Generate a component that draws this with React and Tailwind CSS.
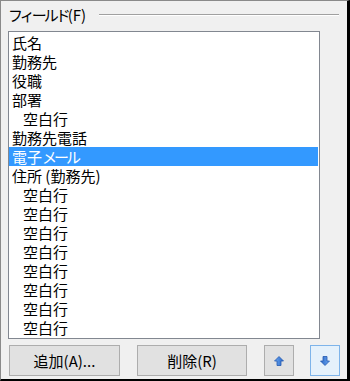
import React from 'react';

const Kana = ({ children }) => <span className="tracking-[-3px]">{children}</span>;

const items = [
  { label: '氏名' },
  { label: '勤務先' },
  { label: '役職' },
  { label: '部署' },
  { label: '空白行', indent: true },
  { label: '勤務先電話' },
  { label: <>電子<Kana>メール</Kana></>, selected: true },
  { label: '住所 (勤務先)' },
  { label: '空白行', indent: true },
  { label: '空白行', indent: true },
  { label: '空白行', indent: true },
  { label: '空白行', indent: true },
  { label: '空白行', indent: true },
  { label: '空白行', indent: true },
  { label: '空白行', indent: true },
  { label: '空白行', indent: true },
];

const Arrow = ({ down }) => (
  <svg width="10" height="10" viewBox="0 0 10 10" className={down ? 'rotate-180' : ''}>
    <defs>
      <linearGradient id={down ? 'gd' : 'gu'} x1="0" y1="0" x2="1" y2="0">
        <stop offset="0" stopColor="#6aa6f0" />
        <stop offset="1" stopColor="#2a68c8" />
      </linearGradient>
    </defs>
    <polygon
      points="5,0.5 9.5,5 7,5 7,9.5 3,9.5 3,5 0.5,5"
      fill={`url(#${down ? 'gd' : 'gu'})`}
      stroke="#2459b0"
      strokeWidth="0.8"
      strokeLinejoin="round"
    />
  </svg>
);

const App = () => {
  return (
    <div
      className="w-[350px] h-[381px] bg-[#f0f0f0] border-l border-t border-[#8a8a8a] border-r-[3px] border-b-2 border-r-black border-b-black pt-[4px] pl-[7px] text-[15px] text-black"
      style={{ fontFamily: '"Noto Sans CJK JP", "Noto Sans", sans-serif' }}
    >
      <div className="flex items-center h-[20px] w-[331px]">
        <span className="leading-[20px] whitespace-nowrap"><Kana>フィールド</Kana>(F)</span>
        <div className="flex-1 ml-[13px] border-t border-[#a0a0a0] border-b border-b-white" />
      </div>

      <div className="mt-[6px] w-[312px] h-[308px] bg-white border border-[#828790] pt-px overflow-hidden">
        {items.map((item, i) => (
          <div
            key={i}
            className={`h-[19px] leading-[19px] mr-px whitespace-nowrap ${item.indent ? 'pl-[14px]' : 'pl-[3px]'} ${item.selected ? 'bg-[#3399ff] text-white' : ''}`}
          >
            {item.label}
          </div>
        ))}
      </div>

      <div className="mt-[6px] flex h-[31px]">
        <button className="ml-px w-[111px] h-[31px] bg-[#e1e1e1] border border-[#adadad] leading-none">
          追加(A)...
        </button>
        <button className="ml-[17px] w-[110px] h-[31px] bg-[#e1e1e1] border border-[#adadad] leading-none">
          削除(R)
        </button>
        <button className="ml-[17px] w-[30px] h-[31px] bg-[#e1e1e1] border border-[#adadad] flex items-center justify-center">
          <Arrow />
        </button>
        <button className="ml-[16px] w-[30px] h-[31px] bg-[#e5f1fb] border border-[#7eb4ea] flex items-center justify-center">
          <Arrow down />
        </button>
      </div>
    </div>
  );
};

export default App;
